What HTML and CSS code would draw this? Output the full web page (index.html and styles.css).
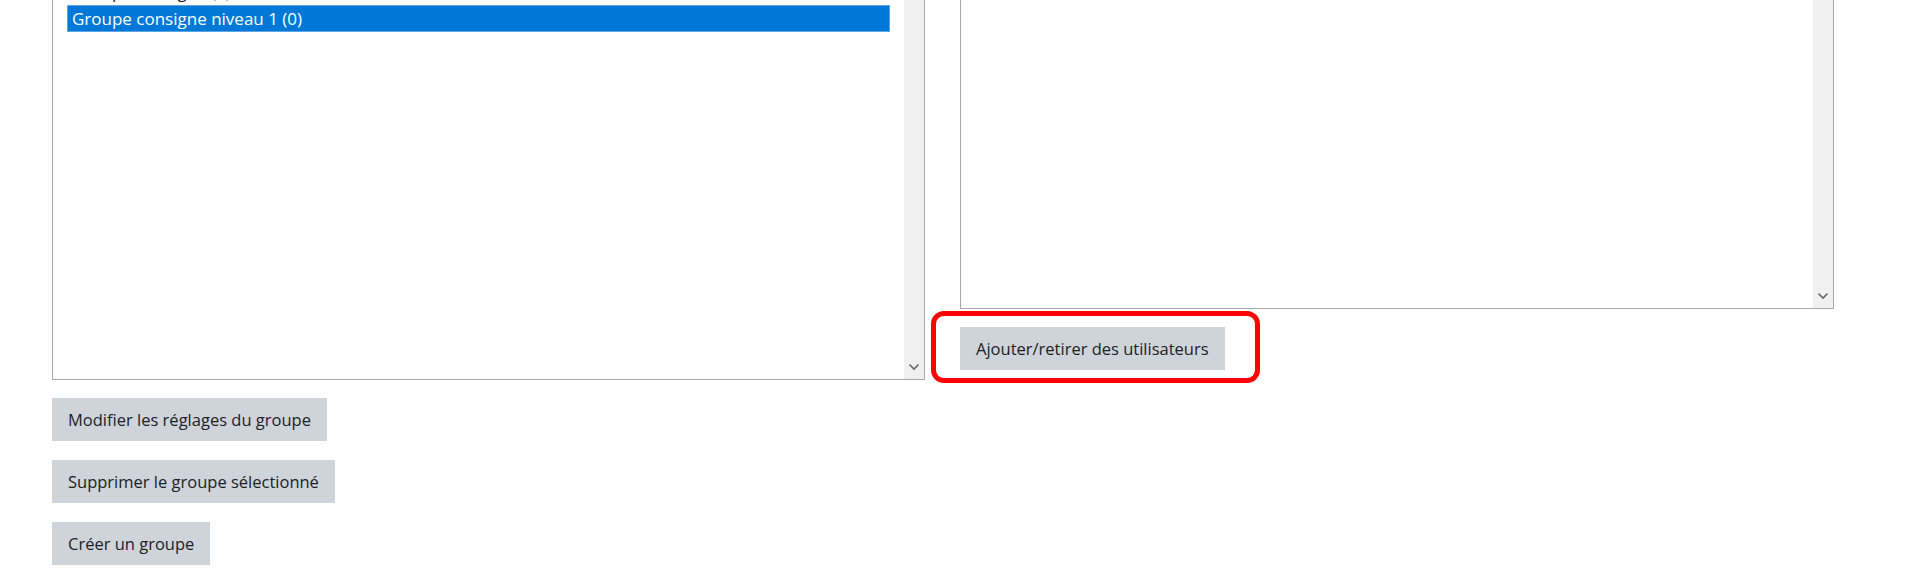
FILE: index.html
```html
<!DOCTYPE html>
<html lang="fr">
<head>
    <meta charset="UTF-8">
    <title>Groupes</title>
    <link rel="stylesheet" href="styles.css">
</head>
<body>
    <div class="groups-page">
        <div class="groups-column">
            <div class="listbox listbox-groups">
                <div class="listbox-options">
                    <div class="listbox-option">Groupe consigne niveau 2 (3)</div>
                    <div class="listbox-option">Groupe consigne (0)</div>
                    <div class="listbox-option selected">Groupe consigne niveau 1 (0)</div>
                </div>
                <div class="listbox-scrollbar">
                    <svg class="scroll-arrow" width="12" height="8" viewBox="0 0 12 8"><polyline points="1.5,1.5 6,6 10.5,1.5" fill="none" stroke="#666" stroke-width="1.6"/></svg>
                </div>
            </div>
            <div class="button-stack">
                <button class="btn">Modifier les réglages du groupe</button>
                <button class="btn">Supprimer le groupe sélectionné</button>
                <button class="btn">Créer un groupe</button>
            </div>
        </div>

        <div class="members-column">
            <div class="listbox listbox-members">
                <div class="listbox-options"></div>
                <div class="listbox-scrollbar">
                    <svg class="scroll-arrow" width="12" height="8" viewBox="0 0 12 8"><polyline points="1.5,1.5 6,6 10.5,1.5" fill="none" stroke="#666" stroke-width="1.6"/></svg>
                </div>
            </div>
            <div class="highlight-box">
                <button class="btn">Ajouter/retirer des utilisateurs</button>
            </div>
        </div>
    </div>
</body>
</html>
```

FILE: styles.css
```css
* {
    margin: 0;
    padding: 0;
    box-sizing: border-box;
}

body {
    font-family: 'Open Sans', 'Noto Sans', sans-serif;
    background: #fff;
    color: #1d2125;
    overflow: hidden;
}

.groups-page {
    display: grid;
    grid-template-columns: 873px 874px;
    column-gap: 35px;
    align-items: start;
    padding-left: 52px;
    margin-top: -50px;
}

.listbox {
    display: flex;
    border: 1px solid #a7a7b2;
    background: #fff;
}

.listbox-groups {
    height: 430px;
}

.listbox-members {
    height: 359px;
}

.listbox-options {
    flex: 1;
    padding: 0 14px;
    font-size: 17px;
}

.listbox-option {
    height: 27px;
    line-height: 25px;
    padding: 0 4px;
    white-space: nowrap;
    border: 1px solid transparent;
}

.listbox-option.selected {
    background: #0078d7;
    border-color: #5ea6e6;
    color: #fff;
}

.listbox-scrollbar {
    width: 20px;
    background: #f0f0f0;
    display: flex;
    align-items: flex-end;
    justify-content: center;
    padding-bottom: 8px;
}

.button-stack {
    display: flex;
    flex-direction: column;
    align-items: flex-start;
    gap: 19px;
    margin-top: 18px;
}

.btn {
    font-family: inherit;
    font-size: 16.5px;
    line-height: 27px;
    color: #1d2125;
    background: #ced4da;
    border: 1px solid #ced4da;
    padding: 7px 15px;
    border-radius: 0;
    cursor: pointer;
}

.highlight-box {
    display: inline-block;
    margin: 2px 0 0 -29px;
    padding: 11px 30px 8px 24px;
    border: 5px solid #ff0000;
    border-radius: 13px;
}

.highlight-box .btn {
    display: block;
}
```
